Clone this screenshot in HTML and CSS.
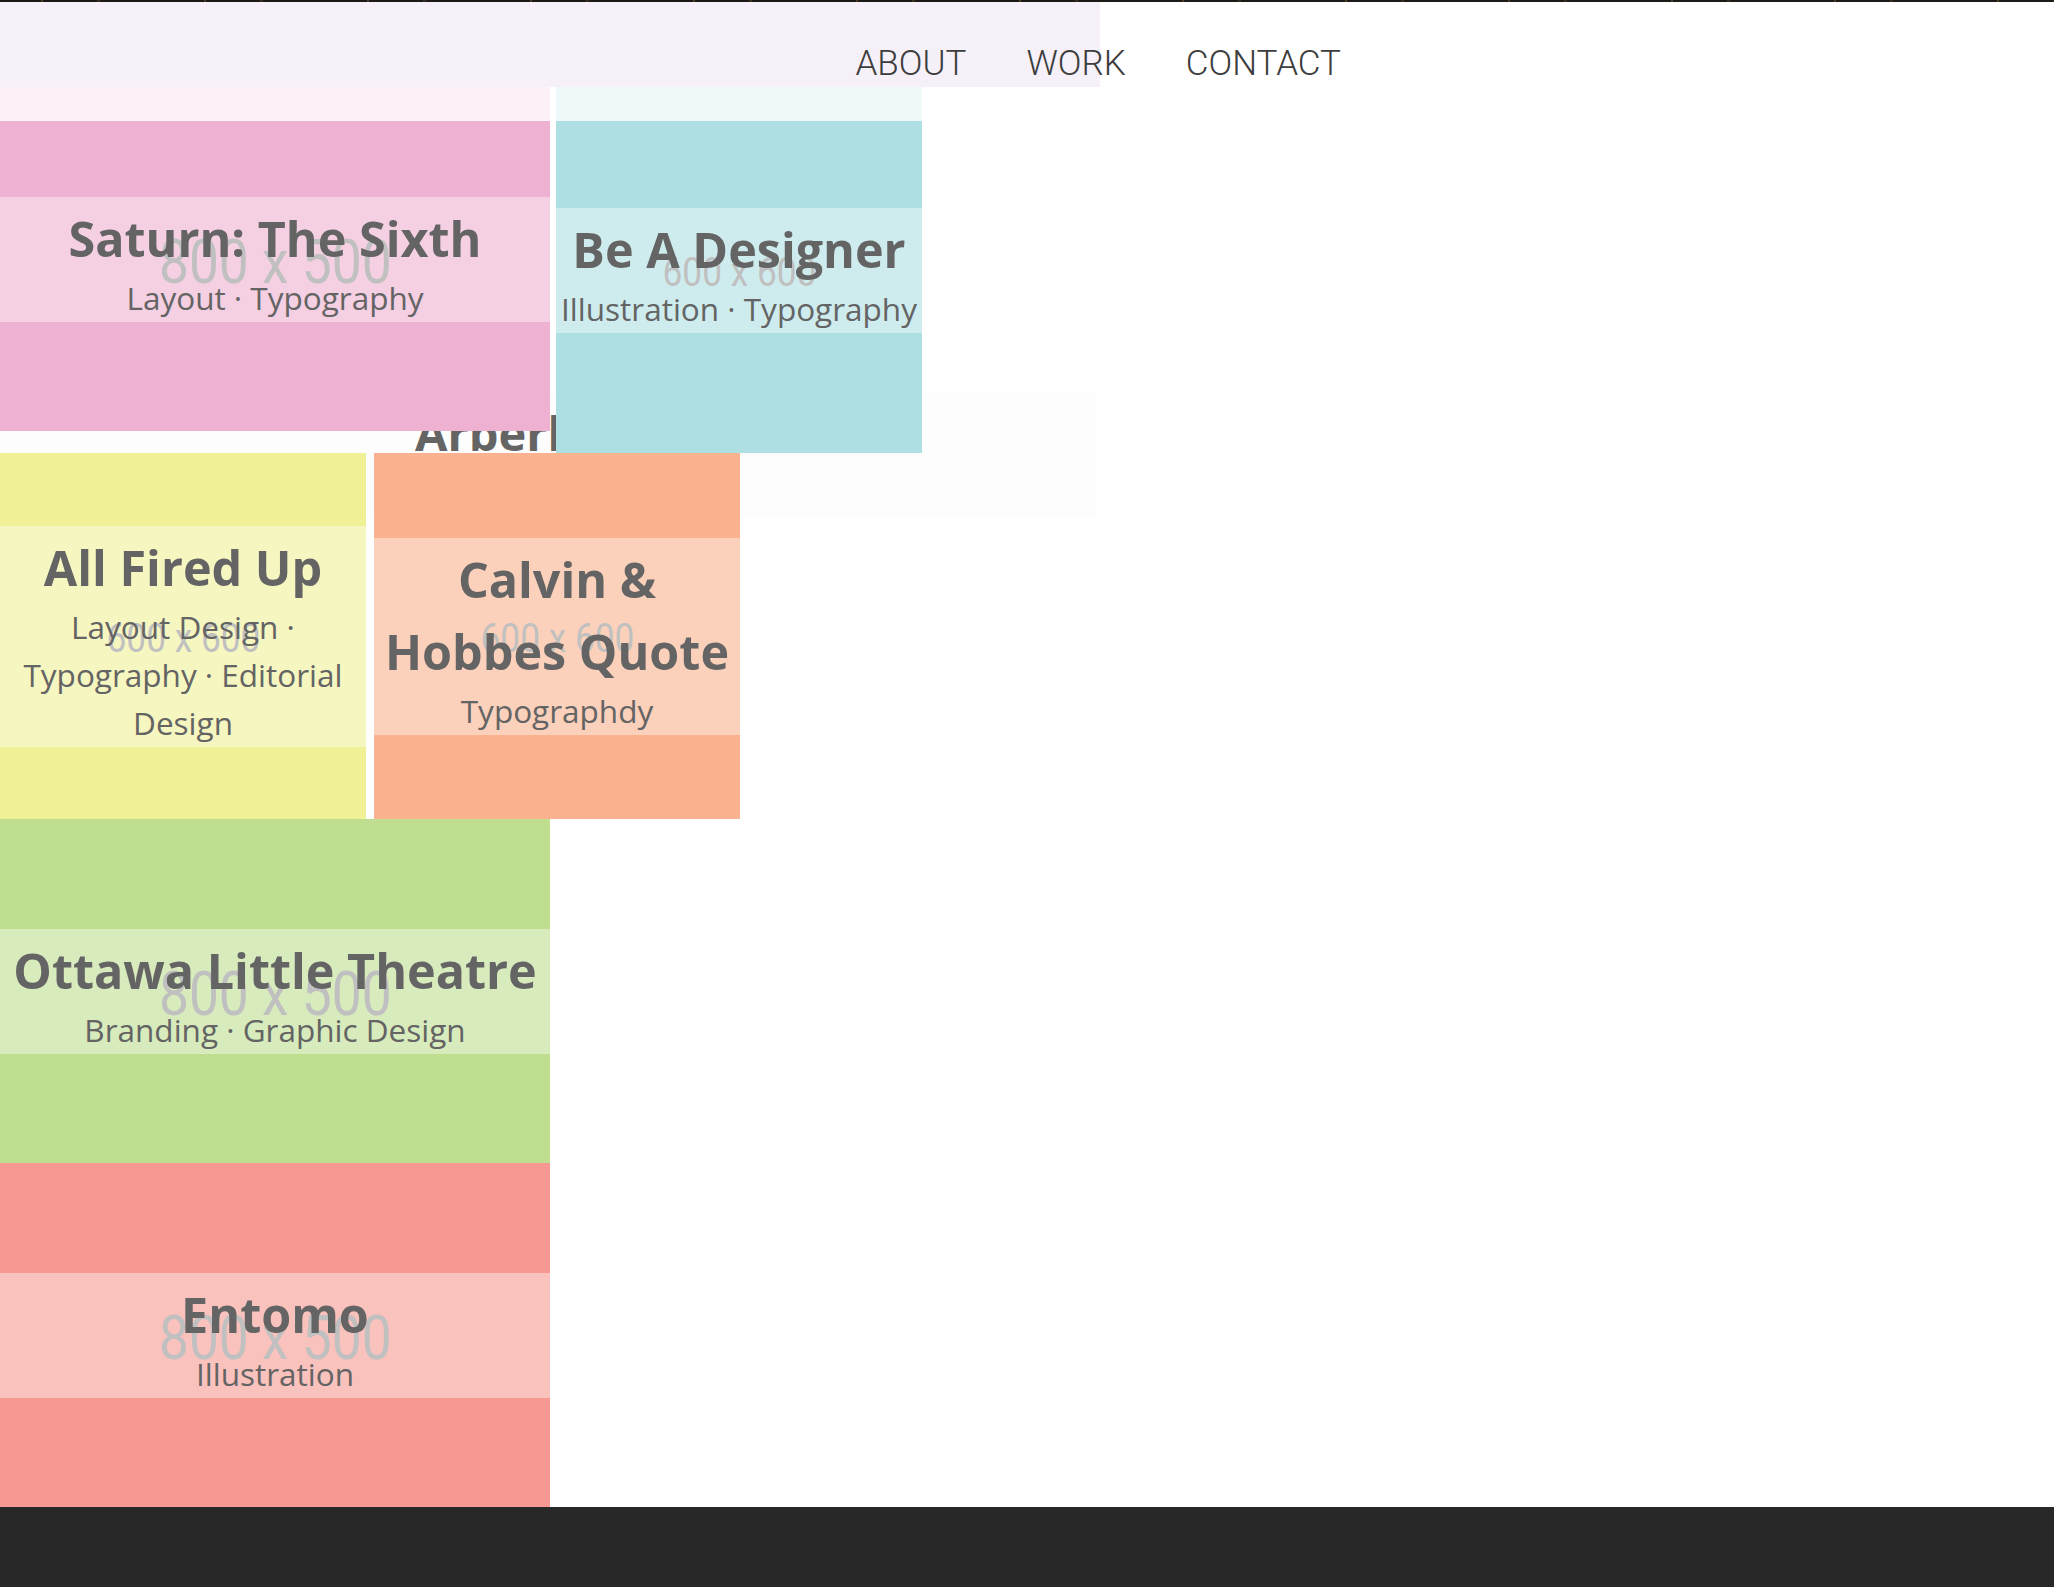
FILE: index.html
```html
<!DOCTYPE html>
<html lang="en">
<head>
<meta charset="utf-8">
<title>Work</title>
<link rel="stylesheet" href="styles.css">
</head>
<body>
<div class="top-strip"></div>
<header class="site-header">
  <nav class="nav">
    <a class="nav-link" href="#about">ABOUT</a>
    <a class="nav-link" href="#work">WORK</a>
    <a class="nav-link" href="#contact">CONTACT</a>
  </nav>
</header>
<main class="work">
  <div class="header-fade"></div>
  <section class="intro">
    <h1 class="intro-title">Arberlin</h1>
  </section>
  <div class="grid">
    <div class="row row-a">
      <a class="tile tile-wide pink" href="#">
        <span class="ph ph-wide">800 x 500</span>
        <span class="band"><span class="title">Saturn: The Sixth</span><span class="tags">Layout · Typography</span></span>
      </a>
      <a class="tile tile-square blue" href="#">
        <span class="ph ph-square">600 x 600</span>
        <span class="band"><span class="title">Be A Designer</span><span class="tags">Illustration · Typography</span></span>
      </a>
    </div>
    <div class="row row-b">
      <a class="tile tile-square yellow" href="#">
        <span class="ph ph-square">600 x 600</span>
        <span class="band"><span class="title">All Fired Up</span><span class="tags">Layout Design · Typography · Editorial Design</span></span>
      </a>
      <a class="tile tile-square orange" href="#">
        <span class="ph ph-square">600 x 600</span>
        <span class="band"><span class="title">Calvin &amp; Hobbes Quote</span><span class="tags">Typographdy</span></span>
      </a>
    </div>
    <div class="row">
      <a class="tile tile-wide green" href="#">
        <span class="ph ph-wide">800 x 500</span>
        <span class="band"><span class="title">Ottawa Little Theatre</span><span class="tags">Branding · Graphic Design</span></span>
      </a>
    </div>
    <div class="row">
      <a class="tile tile-wide red" href="#">
        <span class="ph ph-wide">800 x 500</span>
        <span class="band"><span class="title">Entomo</span><span class="tags">Illustration</span></span>
      </a>
    </div>
  </div>
</main>
<footer class="site-footer"></footer>
</body>
</html>
```

FILE: styles.css
```css
* { box-sizing: border-box; }

html, body {
  margin: 0;
  padding: 0;
  background: #ffffff;
}

body {
  font-family: "Open Sans", "Noto Sans", sans-serif;
  color: #646464;
}

.top-strip {
  height: 2px;
  background:
    repeating-linear-gradient(90deg, transparent 0 41px, rgba(140,105,50,.45) 41px 43px, transparent 43px 97px, rgba(90,70,40,.45) 97px 100px, transparent 100px 163px),
    #1c1a17;
}

.site-header {
  height: 85px;
  background: linear-gradient(#f6f1f8, #f6f1f8) 0 0 / 1100px 100% no-repeat;
}

.nav {
  width: 1341px;
  display: flex;
  justify-content: flex-end;
  gap: 60px;
  padding-top: 44px;
}

.nav-link {
  font-family: "Roboto", "Open Sans", sans-serif;
  font-weight: 300;
  font-size: 35px;
  line-height: 35px;
  color: #3d3d3d;
  text-decoration: none;
}

.work {
  position: relative;
}

.header-fade {
  position: absolute;
  left: 0;
  right: 0;
  top: 0;
  height: 34px;
  background: rgba(255,255,255,.82);
  z-index: 3;
}

.intro {
  position: absolute;
  left: 0;
  top: 306px;
  width: 1097px;
  height: 125px;
  background: #fdfdfd;
  padding: 17px 0 0 415px;
  z-index: 0;
}

.intro-title {
  margin: 0;
  font-size: 47px;
  line-height: 1;
  font-weight: 700;
  color: #646464;
}

.grid {
  position: relative;
  z-index: 1;
}

.row {
  display: flex;
  align-items: flex-start;
}

.row-a { gap: 6px; }
.row-b { gap: 8px; }

.tile {
  display: grid;
  place-items: center;
  text-decoration: none;
  color: #646464;
  overflow: hidden;
}

.tile > * { grid-area: 1 / 1; }

.tile-wide { width: 550px; height: 344px; }
.tile-square { width: 366px; height: 366px; }

.pink { background: #eeb1d1; }
.blue { background: #aedfe3; }
.yellow { background: #f0f097; }
.orange { background: #fab38e; }
.green { background: #bfde8f; }
.red { background: #f79992; }

.ph {
  font-family: "Roboto", "Open Sans", sans-serif;
  color: #969696;
  line-height: 1;
  transform: scaleX(.86);
}
.ph-wide { font-size: 62px; margin-top: 6px; }
.ph-square { font-size: 41px; margin-top: 4px; }

.band {
  position: relative;
  justify-self: stretch;
  background: rgba(255,255,255,.4);
  display: flex;
  flex-direction: column;
  align-items: center;
  text-align: center;
}

.title {
  font-size: 48.5px;
  line-height: 72px;
  padding-top: 5px;
  font-weight: 700;
  color: #646464;
}

.tags {
  font-size: 31.5px;
  line-height: 48px;
  font-weight: 400;
  color: #646464;
}

.site-footer {
  height: 80px;
  background: #282828;
}
```
